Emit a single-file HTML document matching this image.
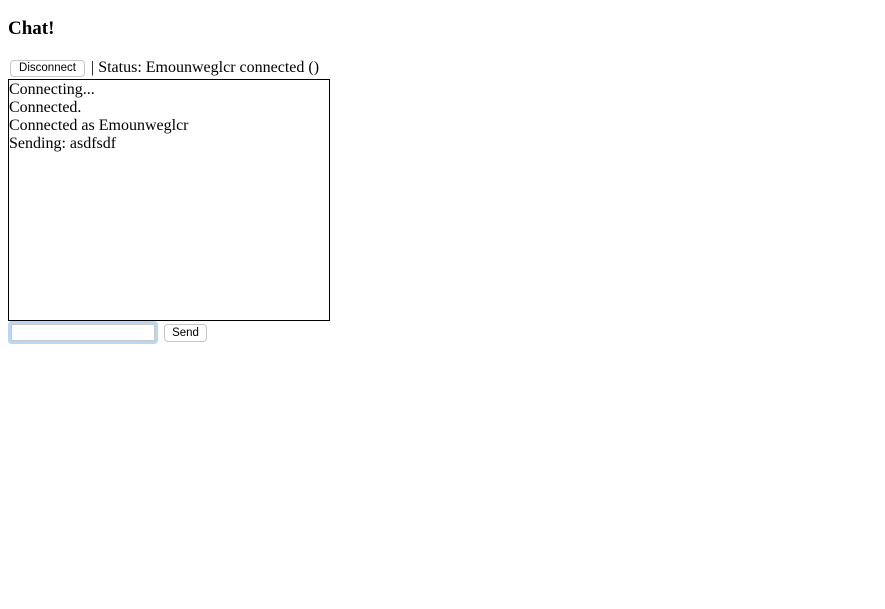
<!DOCTYPE html>
<html><head><style>
body{margin:0;width:885px;height:609px;background:#fff;font-family:"Liberation Serif",serif;color:#000;position:relative;overflow:hidden}
.a{position:absolute;white-space:nowrap}
h1{position:absolute;left:8px;top:18px;margin:0;font-size:19px;font-weight:bold;line-height:22px}
.btn{position:absolute;background:#fff;border:1px solid #c6c6c6;border-radius:4px;font-family:"Liberation Sans",sans-serif;font-size:11.5px;text-align:center;box-sizing:border-box}
.log{position:absolute;left:8px;top:79px;width:322px;height:242px;border:1px solid #000;box-sizing:border-box;font-size:16px;line-height:18px;padding:1px 0 0 0}
.inp{position:absolute;left:8px;top:321px;width:150px;height:23px;border:3px solid #b9d7f5;border-radius:4px;box-sizing:border-box;box-shadow:inset 0 0 0 1px #c8c8c8}
</style></head><body>
<h1>Chat!</h1>
<div class="btn" style="left:10px;top:60px;width:75px;height:17px;line-height:15px">Disconnect</div>
<div class="a" style="left:91px;top:59px;font-size:16px;line-height:18px">| Status: Emounweglcr connected ()</div>
<div class="log">Connecting...<br>Connected.<br>Connected as Emounweglcr<br>Sending: asdfsdf</div>
<div class="inp"></div>
<div class="btn" style="left:164px;top:324px;width:43px;height:18px;line-height:16px">Send</div>
</body></html>
